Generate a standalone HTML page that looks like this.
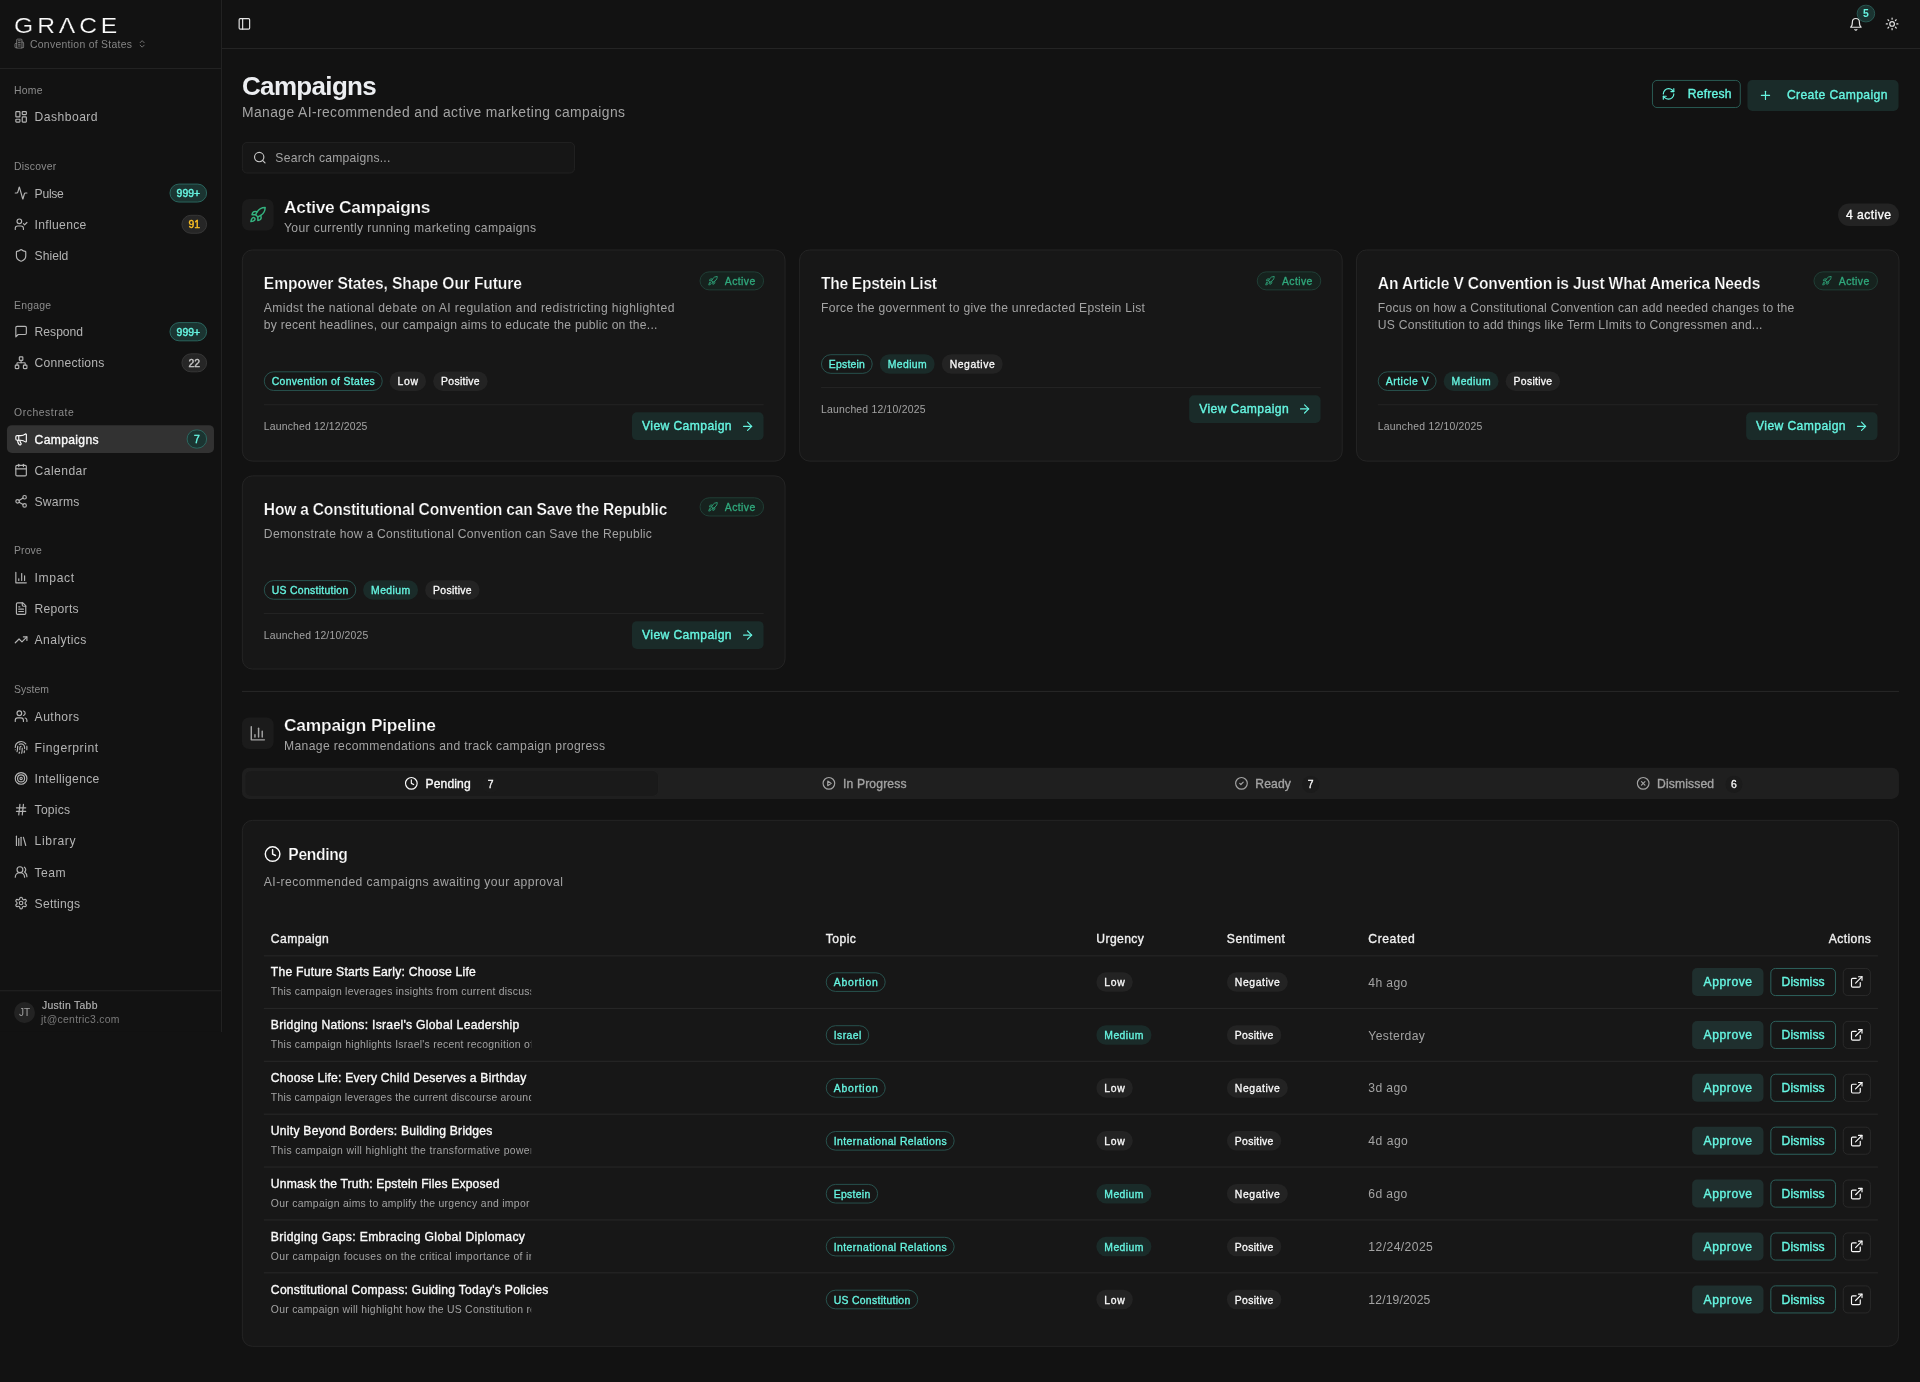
<!DOCTYPE html>
<html lang="en">
<head>
<meta charset="utf-8">
<title>Campaigns - GRACE</title>
<meta name="viewport" content="width=1920">
<style>
*{box-sizing:border-box;margin:0;padding:0}
html,body{width:1920px;height:1382px;background:#121212;overflow:hidden}
.root{position:absolute;left:0;top:0;width:8856px;height:6376px;transform-origin:0 0;will-change:transform}
body{font-family:"Liberation Sans",sans-serif;color:#fafafa;font-size:55.996px;line-height:80.719px;position:relative;-webkit-font-smoothing:antialiased}
span{white-space:nowrap}
svg{display:block;flex:none}
/* sidebar */
.sb{position:absolute;left:0;top:0;width:1023.975px;height:4760.1px;border-right:4px solid #262626;background:#121212}
.logo{position:absolute;left:64.575px;top:53.966px;height:129.15px;line-height:129.15px;font-size:101.475px;color:#fafafa;font-weight:400;-webkit-text-stroke:1.153px #121212;transform:scaleX(1.12);transform-origin:0 50%}
.lam{position:absolute;left:291.971px;top:123.846px;width:34.133px;height:10.148px;background:#121212;clip-path:polygon(9.5% 0,90.5% 0,100% 100%,0 100%)}
.org{position:absolute;left:64.575px;top:173.43px;height:64.575px;display:flex;align-items:center;color:#858585;font-size:47.97px;line-height:64.575px}
.org .orgt{margin-left:25.369px}
.org .chev{margin-left:24.446px}
.org svg:first-child{position:relative;top:-5.074px}
.org .chev{position:relative;top:-2.767px}
.sbline{position:absolute;left:0;width:1019.362px;height:4px;background:#262626}
.glabel{position:absolute;left:64.575px;height:129.15px;line-height:129.15px;font-size:47.97px;color:#8c8c8c;font-weight:500}
.ni{position:absolute;left:32.288px;width:954.787px;height:127.997px;border-radius:23.062px;display:flex;align-items:center;padding:0 31.826px 0 32.288px;color:#b4b4b4;font-size:55.996px}
.ni svg{margin-right:30.442px}
.ni>span:first-of-type{position:relative;top:2.306px}
.ni.act{background:#323232;color:#fafafa;-webkit-text-stroke:1.614px currentColor}
.nb{margin-left:auto;height:87.637px;min-width:94.095px;padding:0 28.598px;border-radius:46.125px;font-size:47.97px;-webkit-text-stroke:1.845px currentColor;display:flex;align-items:center;justify-content:center;border:4px solid;line-height:1;padding-top:4.612px}
.nb.bt{color:#66f5e1;background:#1b3431;border-color:#2c6e66}
.nb.ba{color:#fbbf24;background:#262626;border-color:#3a3a3a}
.nb.bg{color:#c8c8c8;background:#262626;border-color:#3a3a3a}
.user{position:absolute;left:64.575px;top:4606.042px;height:129.15px;display:flex;align-items:center}
.av{width:96.862px;height:96.862px;border-radius:50%;background:#232323;color:#a3a3a3;font-size:46.125px;display:flex;align-items:center;justify-content:center}
.ut{margin-left:32.288px;display:flex;flex-direction:column;align-items:flex-start}
.un{font-size:47.97px;line-height:64.575px;color:#b4b4b4;-webkit-text-stroke:0.692px currentColor}
.ue{font-size:47.97px;line-height:64.575px;color:#7a7a7a;position:relative;left:-4.612px}
/* header */
.hd{position:absolute;left:1023.975px;top:0;width:7832.025px;height:225.551px;border-bottom:4px solid #282828}
.hd svg{position:absolute}
.hd .panel{left:71.494px;top:78.412px;color:#e5e5e5}
.hd .bell{left:7504.076px;top:79.796px;color:#e5e5e5}
.hd .sun{left:7670.587px;top:78.412px;color:#e5e5e5}
.bellb{position:absolute;left:7539.592px;top:22.14px;width:85.331px;height:80.719px;border-radius:46.125px;background:#1b3431;border:4px solid #2b5f59;color:#66f5e1;font-size:47.97px;font-weight:700;display:flex;align-items:center;justify-content:center;line-height:1}
/* main */
main{position:absolute;left:0;top:0;width:8856px;height:6374.475px}
main>*{position:absolute}
h1{left:1116.225px;top:321.952px;font-size:119.925px;line-height:145.294px;font-weight:700;color:#eceef1}
.sub1{left:1116.225px;top:467.707px;font-size:64.022px;line-height:96.862px;color:#a3a3a3}
.btn{height:129.15px;border-radius:23.062px;display:flex;align-items:center;font-size:55.996px;-webkit-text-stroke:1.614px currentColor;color:#66f5e1}
.btn span{position:relative;top:-0.922px}
.rf{left:7619.85px;top:369px;width:409.129px;border:4px solid #2d655e;padding-left:40.59px}
.rf svg{margin-right:56.272px}
.cc{left:8060.344px;top:369px;width:696.487px;height:142.987px;background:#1a2b29;padding-left:50.737px}
.cc svg{margin-right:66.42px}
.search{left:1116.225px;top:654.975px;width:1535.962px;height:145.294px;border:4px solid #242424;border-radius:23.062px;background:#161616;display:flex;align-items:center;padding-left:46.125px;color:#a3a3a3;font-size:55.996px}
.search svg{margin-right:39.206px;color:#c8c8c8}
.search span{position:relative;top:2.306px}
.ibox{left:1116.225px;width:145.294px;height:145.294px;border-radius:32.288px;background:#1b1b1b;display:flex;align-items:center;justify-content:center}
h2{left:1309.95px;font-size:80.027px;line-height:113.006px;font-weight:700;color:#fafafa;-webkit-text-stroke:1.153px #121212}
.sub2{left:1309.95px;font-size:55.996px;line-height:80.719px;color:#a3a3a3}
.cnt{left:8477.775px;top:938.644px;width:281.362px;height:103.781px;border-radius:55.35px;background:#232323;color:#fafafa;font-size:55.996px;-webkit-text-stroke:1.614px currentColor;display:flex;align-items:center;justify-content:center;padding-top:3.69px}
.card{border:4px solid #272727;border-radius:48.431px;background:#171717}
.ac{width:2506.894px}
.ac>*{position:absolute}
.ct{left:96.862px;top:98.246px;font-size:71.955px;line-height:110.7px;font-weight:700;color:#fafafa;-webkit-text-stroke:1.153px #171717}
.cd{left:96.862px;top:226.012px;font-size:55.996px;line-height:78.412px;color:#a3a3a3}
.abadge{right:95.017px;top:96.862px;height:87.637px;border-radius:46.125px;border:4px solid #21433a;background:#16221e;color:#30a97d;font-size:47.97px;-webkit-text-stroke:1.384px currentColor;display:flex;align-items:center;padding:0 36.9px 0 32.749px}
.abadge svg{margin-right:31.365px}
.abadge span{position:relative;top:3.229px}
.tags{left:96.862px;display:flex;gap:32.288px}
.bd>span{position:relative;top:2.767px}
.bd{height:89.944px;border-radius:46.125px;padding:0 36.9px;font-size:47.97px;-webkit-text-stroke:1.384px currentColor;display:inline-flex;align-items:center;line-height:1}
.bd.out{border:4px solid #2a5a55;color:#66f5e1;padding:0 32.288px}
.bd.sec{background:#232323;color:#fafafa}
.bd.med{background:#1a2b29;color:#66f5e1}
.cline{left:96.862px;right:96.862px;height:4px;background:#262626}
.launched{left:96.862px;height:129.15px;line-height:129.15px;font-size:47.97px;color:#a3a3a3}
.vbtn{right:97.324px;height:127.997px;width:606.544px;border-radius:23.062px;background:#1a2b29;color:#66f5e1;font-size:55.996px;-webkit-text-stroke:1.614px currentColor;display:flex;align-items:center;padding-left:46.125px}
.vbtn svg{margin-left:41.512px}
.sep{left:1116.225px;top:3187.237px;width:7642.912px;height:4px;background:#2a2a2a}
.tabs{left:1116.225px;top:3541.477px;width:7642.912px;height:143.91px;border-radius:32.288px;background:#1f1f1f;padding:16.005px;display:flex}
.tab{flex:1;height:112.084px;border-radius:23.062px;display:flex;align-items:center;justify-content:center;color:#a3a3a3;font-size:55.996px;-webkit-text-stroke:1.614px currentColor}
.tab svg{margin-right:32.288px}
.tab.on{background:#1a1a1a;color:#fafafa;box-shadow:0 0 0 4px #212121}
.tab>span:first-of-type{position:relative;top:3.69px}
.tc{margin-left:52.121px;width:78.412px;height:79.796px;line-height:79.796px;border-radius:41.512px;background:#1b1b1b;text-align:center;font-size:47.97px;color:#fafafa;-webkit-text-stroke:1.384px currentColor;position:relative;top:4.151px}
.pc{left:1116.225px;top:3782.25px;width:7642.912px;height:2429.404px}
.pc>*{position:absolute}
.pt{left:96.862px;top:101.475px;height:113.006px;display:flex;align-items:center;font-size:71.955px;font-weight:700;color:#fafafa;-webkit-text-stroke:1.153px #171717}
.pt svg{margin-right:32.288px;position:relative;top:-4.612px}
.pd{left:96.862px;top:242.617px;font-size:55.996px;line-height:80.719px;color:#a3a3a3}
.th{left:96.862px;top:461.25px;width:7444.575px;height:163.744px;border-bottom:4px solid #2a2a2a;font-size:55.996px;-webkit-text-stroke:1.614px currentColor;color:#f0f0f0}
.th span{position:absolute;top:41.974px}
.tr{left:96.862px;width:7444.575px;height:244.001px;border-bottom:4px solid #2b2b2b}
.tr>*{position:absolute}
.tr:last-child{border-bottom:none}
.rt{left:32.288px;top:35.516px;font-size:55.996px;line-height:80.719px;-webkit-text-stroke:1.614px currentColor;color:#fafafa}
.rs{left:32.288px;top:132.84px;width:1200.634px;overflow:hidden;font-size:47.97px;line-height:64.575px;color:#a3a3a3}
.c2{left:2592.225px;top:76.106px}
.c3{left:3839.906px;top:76.106px}
.c4{left:4441.837px;top:76.106px}
.cr{left:5094.506px;top:83.025px;color:#a3a3a3;font-size:55.996px;line-height:80.719px}
.b{top:55.811px;height:129.15px;border-radius:23.062px;display:flex;align-items:center;justify-content:center;font-size:55.996px;-webkit-text-stroke:1.614px currentColor;color:#66f5e1}
.b span{position:relative;top:1.845px}
.ap{left:6588.034px;width:329.332px;background:#1f2f2e}
.ds{left:6948.731px;width:302.119px;border:4px solid #2f6b65}
.ex{left:7283.137px;width:129.15px;border:4px solid #2c2c2c;color:#fafafa}

</style>
</head>
<body>
<div class="root" style="transform:scale(0.216802)">
<aside class="sb">
<div class="logo"><span style="letter-spacing:16.042px;margin-right:-16.042px">GRACE</span></div><i class="lam"></i>
<div class="org"><svg width="48.431" height="48.431" viewBox="0 0 24 24" fill="none" stroke="currentColor" stroke-width="2" stroke-linecap="round" stroke-linejoin="round"><path d="M6 22V4a2 2 0 0 1 2-2h8a2 2 0 0 1 2 2v18Z"/><path d="M6 12H4a2 2 0 0 0-2 2v6a2 2 0 0 0 2 2h2"/><path d="M18 9h2a2 2 0 0 1 2 2v9a2 2 0 0 1-2 2h-2"/><path d="M10 6h4"/><path d="M10 10h4"/><path d="M10 14h4"/><path d="M10 18h4"/></svg><span class="orgt" style="letter-spacing:1.324px;margin-right:-1.324px">Convention of States</span><svg class="chev" width="45.203" height="45.203" viewBox="0 0 24 24" fill="none" stroke="currentColor" stroke-width="2" stroke-linecap="round" stroke-linejoin="round"><path d="m7 15 5 5 5-5"/><path d="m7 9 5-5 5 5"/></svg></div>
<div class="sbline" style="top:313.65px"></div>
<div class="glabel" style="top:351.472px"><span style="letter-spacing:1.162px;margin-right:-1.162px">Home</span></div>
<div class="ni" style="top:475.226px"><svg width="64.575" height="64.575" viewBox="0 0 24 24" fill="none" stroke="currentColor" stroke-width="2" stroke-linecap="round" stroke-linejoin="round"><rect width="7" height="9" x="3" y="3" rx="1"/><rect width="7" height="5" x="14" y="3" rx="1"/><rect width="7" height="9" x="14" y="12" rx="1"/><rect width="7" height="5" x="3" y="16" rx="1"/></svg><span style="letter-spacing:2.085px;margin-right:-2.085px">Dashboard</span></div>
<div class="glabel" style="top:702.945px"><span style="letter-spacing:1.185px;margin-right:-1.185px">Discover</span></div>
<div class="ni" style="top:826.698px"><svg width="64.575" height="64.575" viewBox="0 0 24 24" fill="none" stroke="currentColor" stroke-width="2" stroke-linecap="round" stroke-linejoin="round"><path d="M22 12h-2.48a2 2 0 0 0-1.93 1.46l-2.35 8.36a.25.25 0 0 1-.48 0L9.24 2.18a.25.25 0 0 0-.48 0l-2.35 8.36A2 2 0 0 1 4.49 12H2"/></svg><span style="letter-spacing:-1.282px;margin-right:1.282px">Pulse</span><span class="nb bt">999+</span></div>
<div class="ni" style="top:970.47px"><svg width="64.575" height="64.575" viewBox="0 0 24 24" fill="none" stroke="currentColor" stroke-width="2" stroke-linecap="round" stroke-linejoin="round"><path d="m16 11 2 2 4-4"/><path d="M16 21v-2a4 4 0 0 0-4-4H6a4 4 0 0 0-4 4v2"/><circle cx="9" cy="7" r="4"/></svg><span style="letter-spacing:1.434px;margin-right:-1.434px">Influence</span><span class="nb ba">91</span></div>
<div class="ni" style="top:1114.242px"><svg width="64.575" height="64.575" viewBox="0 0 24 24" fill="none" stroke="currentColor" stroke-width="2" stroke-linecap="round" stroke-linejoin="round"><path d="M20 13c0 5-3.5 7.5-7.66 8.95a1 1 0 0 1-.67-.01C7.5 20.5 4 18 4 13V6a1 1 0 0 1 1-1c2 0 4.5-1.2 6.24-2.72a1.17 1.17 0 0 1 1.52 0C14.51 3.81 17 5 19 5a1 1 0 0 1 1 1z"/></svg><span style="letter-spacing:0.009px;margin-right:-0.009px">Shield</span></div>
<div class="glabel" style="top:1341.961px"><span style="letter-spacing:1.056px;margin-right:-1.056px">Engage</span></div>
<div class="ni" style="top:1465.714px"><svg width="64.575" height="64.575" viewBox="0 0 24 24" fill="none" stroke="currentColor" stroke-width="2" stroke-linecap="round" stroke-linejoin="round"><path d="M21 15a2 2 0 0 1-2 2H7l-4 4V5a2 2 0 0 1 2-2h14a2 2 0 0 1 2 2z"/></svg><span style="letter-spacing:-0.069px;margin-right:0.069px">Respond</span><span class="nb bt">999+</span></div>
<div class="ni" style="top:1609.532px"><svg width="64.575" height="64.575" viewBox="0 0 24 24" fill="none" stroke="currentColor" stroke-width="2" stroke-linecap="round" stroke-linejoin="round"><rect x="16" y="16" width="6" height="6" rx="1"/><rect x="2" y="16" width="6" height="6" rx="1"/><rect x="9" y="2" width="6" height="6" rx="1"/><path d="M5 16v-3a1 1 0 0 1 1-1h12a1 1 0 0 1 1 1v3"/><path d="M12 12V8"/></svg><span style="letter-spacing:1.047px;margin-right:-1.047px">Connections</span><span class="nb bg">22</span></div>
<div class="glabel" style="top:1837.205px"><span style="letter-spacing:2.5px;margin-right:-2.5px">Orchestrate</span></div>
<div class="ni act" style="top:1960.958px"><svg width="64.575" height="64.575" viewBox="0 0 24 24" fill="none" stroke="currentColor" stroke-width="2" stroke-linecap="round" stroke-linejoin="round"><path d="M11 6a13 13 0 0 0 8.4-2.8A1 1 0 0 1 21 4v12a1 1 0 0 1-1.6.8A13 13 0 0 0 11 14H5a2 2 0 0 1-2-2V8a2 2 0 0 1 2-2z"/><path d="M6 14a12 12 0 0 0 2.4 7.2 2 2 0 0 0 3.2-2.4A8 8 0 0 1 10 14"/><path d="M8 6v8"/></svg><span style="letter-spacing:1.504px;margin-right:-1.504px">Campaigns</span><span class="nb bt">7</span></div>
<div class="ni" style="top:2104.776px"><svg width="64.575" height="64.575" viewBox="0 0 24 24" fill="none" stroke="currentColor" stroke-width="2" stroke-linecap="round" stroke-linejoin="round"><path d="M8 2v4"/><path d="M16 2v4"/><rect width="18" height="18" x="3" y="4" rx="2"/><path d="M3 10h18"/></svg><span style="letter-spacing:1.97px;margin-right:-1.97px">Calendar</span></div>
<div class="ni" style="top:2248.548px"><svg width="64.575" height="64.575" viewBox="0 0 24 24" fill="none" stroke="currentColor" stroke-width="2" stroke-linecap="round" stroke-linejoin="round"><circle cx="18" cy="5" r="3"/><circle cx="6" cy="12" r="3"/><circle cx="18" cy="19" r="3"/><line x1="8.59" x2="15.42" y1="13.51" y2="17.49"/><line x1="15.41" x2="8.59" y1="6.51" y2="10.49"/></svg><span style="letter-spacing:0.844px;margin-right:-0.844px">Swarms</span></div>
<div class="glabel" style="top:2476.267px"><span style="letter-spacing:0.673px;margin-right:-0.673px">Prove</span></div>
<div class="ni" style="top:2600.02px"><svg width="64.575" height="64.575" viewBox="0 0 24 24" fill="none" stroke="currentColor" stroke-width="2" stroke-linecap="round" stroke-linejoin="round"><path d="M3 3v18h18"/><path d="M18 17V9"/><path d="M13 17V5"/><path d="M8 17v-3"/></svg><span style="letter-spacing:2.837px;margin-right:-2.837px">Impact</span></div>
<div class="ni" style="top:2743.792px"><svg width="64.575" height="64.575" viewBox="0 0 24 24" fill="none" stroke="currentColor" stroke-width="2" stroke-linecap="round" stroke-linejoin="round"><path d="M15 2H6a2 2 0 0 0-2 2v16a2 2 0 0 0 2 2h12a2 2 0 0 0 2-2V7Z"/><path d="M14 2v4a2 2 0 0 0 2 2h4"/><path d="M10 9H8"/><path d="M16 13H8"/><path d="M16 17H8"/></svg><span style="letter-spacing:1.153px;margin-right:-1.153px">Reports</span></div>
<div class="ni" style="top:2887.563px"><svg width="64.575" height="64.575" viewBox="0 0 24 24" fill="none" stroke="currentColor" stroke-width="2" stroke-linecap="round" stroke-linejoin="round"><polyline points="22 7 13.5 15.5 8.5 10.5 2 17"/><polyline points="16 7 22 7 22 13"/></svg><span style="letter-spacing:1.831px;margin-right:-1.831px">Analytics</span></div>
<div class="glabel" style="top:3115.282px"><span style="letter-spacing:0.3px;margin-right:-0.3px">System</span></div>
<div class="ni" style="top:3239.036px"><svg width="64.575" height="64.575" viewBox="0 0 24 24" fill="none" stroke="currentColor" stroke-width="2" stroke-linecap="round" stroke-linejoin="round"><path d="M16 21v-2a4 4 0 0 0-4-4H6a4 4 0 0 0-4 4v2"/><circle cx="9" cy="7" r="4"/><path d="M22 21v-2a4 4 0 0 0-3-3.87"/><path d="M16 3.13a4 4 0 0 1 0 7.75"/></svg><span style="letter-spacing:2.053px;margin-right:-2.053px">Authors</span></div>
<div class="ni" style="top:3382.854px"><svg width="64.575" height="64.575" viewBox="0 0 24 24" fill="none" stroke="currentColor" stroke-width="2" stroke-linecap="round" stroke-linejoin="round"><path d="M12 10a2 2 0 0 0-2 2c0 1.02-.1 2.51-.26 4"/><path d="M14 13.12c0 2.38 0 6.38-1 8.88"/><path d="M17.29 21.02c.12-.6.43-2.3.5-3.02"/><path d="M2 12a10 10 0 0 1 18-6"/><path d="M2 16h.01"/><path d="M21.8 16c.2-2 .131-5.354 0-6"/><path d="M5 19.5C5.5 18 6 15 6 12a6 6 0 0 1 .34-2"/><path d="M8.65 22c.21-.66.45-1.32.57-2"/><path d="M9 6.8a6 6 0 0 1 9 5.2v2"/></svg><span style="letter-spacing:2.532px;margin-right:-2.532px">Fingerprint</span></div>
<div class="ni" style="top:3526.625px"><svg width="64.575" height="64.575" viewBox="0 0 24 24" fill="none" stroke="currentColor" stroke-width="2" stroke-linecap="round" stroke-linejoin="round"><circle cx="12" cy="12" r="10"/><circle cx="12" cy="12" r="6"/><circle cx="12" cy="12" r="2"/></svg><span style="letter-spacing:1.402px;margin-right:-1.402px">Intelligence</span></div>
<div class="ni" style="top:3670.397px"><svg width="64.575" height="64.575" viewBox="0 0 24 24" fill="none" stroke="currentColor" stroke-width="2" stroke-linecap="round" stroke-linejoin="round"><line x1="4" x2="20" y1="9" y2="9"/><line x1="4" x2="20" y1="15" y2="15"/><line x1="10" x2="8" y1="3" y2="21"/><line x1="16" x2="14" y1="3" y2="21"/></svg><span style="letter-spacing:1.01px;margin-right:-1.01px">Topics</span></div>
<div class="ni" style="top:3814.168px"><svg width="64.575" height="64.575" viewBox="0 0 24 24" fill="none" stroke="currentColor" stroke-width="2" stroke-linecap="round" stroke-linejoin="round"><path d="m16 6 4 14"/><path d="M12 6v14"/><path d="M8 8v12"/><path d="M4 4v16"/></svg><span style="letter-spacing:2.998px;margin-right:-2.998px">Library</span></div>
<div class="ni" style="top:3957.94px"><svg width="64.575" height="64.575" viewBox="0 0 24 24" fill="none" stroke="currentColor" stroke-width="2" stroke-linecap="round" stroke-linejoin="round"><path d="M18 21a8 8 0 0 0-16 0"/><circle cx="10" cy="8" r="5"/><path d="M22 20c0-3.37-2-6.5-4-8a5 5 0 0 0-.45-8.3"/></svg><span style="letter-spacing:2.025px;margin-right:-2.025px">Team</span></div>
<div class="ni" style="top:4101.758px"><svg width="64.575" height="64.575" viewBox="0 0 24 24" fill="none" stroke="currentColor" stroke-width="2" stroke-linecap="round" stroke-linejoin="round"><path d="M12.22 2h-.44a2 2 0 0 0-2 2v.18a2 2 0 0 1-1 1.73l-.43.25a2 2 0 0 1-2 0l-.15-.08a2 2 0 0 0-2.73.73l-.22.38a2 2 0 0 0 .73 2.73l.15.1a2 2 0 0 1 1 1.72v.51a2 2 0 0 1-1 1.74l-.15.09a2 2 0 0 0-.73 2.73l.22.38a2 2 0 0 0 2.73.73l.15-.08a2 2 0 0 1 2 0l.43.25a2 2 0 0 1 1 1.73V20a2 2 0 0 0 2 2h.44a2 2 0 0 0 2-2v-.18a2 2 0 0 1 1-1.73l.43-.25a2 2 0 0 1 2 0l.15.08a2 2 0 0 0 2.73-.73l.22-.39a2 2 0 0 0-.73-2.73l-.15-.08a2 2 0 0 1-1-1.74v-.5a2 2 0 0 1 1-1.74l.15-.09a2 2 0 0 0 .73-2.73l-.22-.38a2 2 0 0 0-2.73-.73l-.15.08a2 2 0 0 1-2 0l-.43-.25a2 2 0 0 1-1-1.73V4a2 2 0 0 0-2-2z"/><circle cx="12" cy="12" r="3"/></svg><span style="letter-spacing:1.084px;margin-right:-1.084px">Settings</span></div>
<div class="sbline" style="top:4567.759px"></div>
<div class="user"><div class="av">JT</div><div class="ut"><span class="un" style="letter-spacing:1.421px;margin-right:-1.421px">Justin Tabb</span><span class="ue" style="letter-spacing:1.25px;margin-right:-1.25px">jt@centric3.com</span></div></div>
</aside>
<header class="hd">
<svg class="panel" width="64.575" height="64.575" viewBox="0 0 24 24" fill="none" stroke="currentColor" stroke-width="2" stroke-linecap="round" stroke-linejoin="round"><rect width="18" height="18" x="3" y="3" rx="2"/><path d="M9 3v18"/></svg>
<svg class="bell" width="64.575" height="64.575" viewBox="0 0 24 24" fill="none" stroke="currentColor" stroke-width="2" stroke-linecap="round" stroke-linejoin="round"><path d="M6 8a6 6 0 0 1 12 0c0 7 3 9 3 9H3s3-2 3-9"/><path d="M10.3 21a1.94 1.94 0 0 0 3.4 0"/></svg>
<span class="bellb">5</span>
<svg class="sun" width="64.575" height="64.575" viewBox="0 0 24 24" fill="none" stroke="currentColor" stroke-width="2" stroke-linecap="round" stroke-linejoin="round"><circle cx="12" cy="12" r="4"/><path d="M12 2v2"/><path d="M12 20v2"/><path d="m4.93 4.93 1.41 1.41"/><path d="m17.66 17.66 1.41 1.41"/><path d="M2 12h2"/><path d="M20 12h2"/><path d="m6.34 17.66-1.41 1.41"/><path d="m19.07 4.93-1.41 1.41"/></svg>
</header>
<main>
<h1><span style="letter-spacing:-3.095px;margin-right:3.095px">Campaigns</span></h1>
<p class="sub1"><span style="letter-spacing:1.845px;margin-right:-1.845px">Manage AI-recommended and active marketing campaigns</span></p>
<div class="btn rf"><svg width="64.575" height="64.575" viewBox="0 0 24 24" fill="none" stroke="currentColor" stroke-width="2" stroke-linecap="round" stroke-linejoin="round"><path d="M3 12a9 9 0 0 1 9-9 9.75 9.75 0 0 1 6.74 2.74L21 8"/><path d="M21 3v5h-5"/><path d="M21 12a9 9 0 0 1-9 9 9.75 9.75 0 0 1-6.74-2.74L3 16"/><path d="M8 16H3v5"/></svg><span style="letter-spacing:0.959px;margin-right:-0.959px">Refresh</span></div>
<div class="btn cc"><svg width="64.575" height="64.575" viewBox="0 0 24 24" fill="none" stroke="currentColor" stroke-width="2" stroke-linecap="round" stroke-linejoin="round"><path d="M5 12h14"/><path d="M12 5v14"/></svg><span style="letter-spacing:1.771px;margin-right:-1.771px">Create Campaign</span></div>
<div class="search"><svg width="64.575" height="64.575" viewBox="0 0 24 24" fill="none" stroke="currentColor" stroke-width="2" stroke-linecap="round" stroke-linejoin="round"><circle cx="11" cy="11" r="8"/><path d="m21 21-4.3-4.3"/></svg><span style="letter-spacing:1.116px;margin-right:-1.116px">Search campaigns...</span></div>
<div class="ibox" style="top:917.887px;color:#34b27f"><svg width="80.719" height="80.719" viewBox="0 0 24 24" fill="none" stroke="currentColor" stroke-width="2" stroke-linecap="round" stroke-linejoin="round"><path d="M4.5 16.5c-1.5 1.26-2 5-2 5s3.74-.5 5-2c.71-.84.7-2.13-.09-2.91a2.18 2.18 0 0 0-2.91-.09z"/><path d="m12 15-3-3a22 22 0 0 1 2-3.95A12.88 12.88 0 0 1 22 2c0 2.72-.78 7.5-6 11a22.35 22.35 0 0 1-4 2z"/><path d="M9 12H4s.55-3.03 2-4c1.62-1.08 5 0 5 0"/><path d="M12 15v5s3.03-.55 4-2c1.08-1.62 0-5 0-5"/></svg></div>
<h2 style="top:898.976px"><span style="letter-spacing:-1.199px;margin-right:1.199px">Active Campaigns</span></h2>
<p class="sub2" style="top:1010.137px"><span style="letter-spacing:1.684px;margin-right:-1.684px">Your currently running marketing campaigns</span></p>
<div class="cnt"><span style="letter-spacing:2.085px;margin-right:-2.085px">4 active</span></div>
<div class="card ac" style="left:1116.225px;top:1150.819px;height:977.85px">
<div class="ct"><span style="letter-spacing:-0.553px;margin-right:0.553px">Empower States, Shape Our Future</span></div>
<div class="cd"><div><span style="letter-spacing:1.79px;margin-right:-1.79px">Amidst the national debate on AI regulation and redistricting highlighted</span></div><div><span style="letter-spacing:1.093px;margin-right:-1.093px">by recent headlines, our campaign aims to educate the public on the...</span></div></div>
<div class="abadge"><svg width="48.431" height="48.431" viewBox="0 0 24 24" fill="none" stroke="currentColor" stroke-width="2" stroke-linecap="round" stroke-linejoin="round"><path d="M4.5 16.5c-1.5 1.26-2 5-2 5s3.74-.5 5-2c.71-.84.7-2.13-.09-2.91a2.18 2.18 0 0 0-2.91-.09z"/><path d="m12 15-3-3a22 22 0 0 1 2-3.95A12.88 12.88 0 0 1 22 2c0 2.72-.78 7.5-6 11a22.35 22.35 0 0 1-4 2z"/><path d="M9 12H4s.55-3.03 2-4c1.62-1.08 5 0 5 0"/><path d="M12 15v5s3.03-.55 4-2c1.08-1.62 0-5 0-5"/></svg><span style="letter-spacing:1.822px;margin-right:-1.822px">Active</span></div>
<div class="tags" style="top:558.343px"><span class="bd out"><span style="letter-spacing:1.568px;margin-right:-1.568px">Convention of States</span></span><span class="bd sec"><span style="letter-spacing:3.279px;margin-right:-3.279px">Low</span></span><span class="bd sec"><span style="letter-spacing:1.375px;margin-right:-1.375px">Positive</span></span></div>
<div class="cline" style="top:710.094px"></div>
<div class="launched" style="top:746.994px"><span style="letter-spacing:0.738px;margin-right:-0.738px">Launched 12/12/2025</span></div>
<div class="vbtn" style="top:747.456px"><span style="letter-spacing:1.813px;margin-right:-1.813px">View Campaign</span><svg width="64.575" height="64.575" viewBox="0 0 24 24" fill="none" stroke="currentColor" stroke-width="2" stroke-linecap="round" stroke-linejoin="round"><path d="M5 12h14"/><path d="m12 5 7 7-7 7"/></svg></div>
</div>
<div class="card ac" style="left:3685.849px;top:1150.819px;height:977.85px">
<div class="ct"><span style="letter-spacing:-1.37px;margin-right:1.37px">The Epstein List</span></div>
<div class="cd"><div><span style="letter-spacing:1.315px;margin-right:-1.315px">Force the government to give the unredacted Epstein List</span></div></div>
<div class="abadge"><svg width="48.431" height="48.431" viewBox="0 0 24 24" fill="none" stroke="currentColor" stroke-width="2" stroke-linecap="round" stroke-linejoin="round"><path d="M4.5 16.5c-1.5 1.26-2 5-2 5s3.74-.5 5-2c.71-.84.7-2.13-.09-2.91a2.18 2.18 0 0 0-2.91-.09z"/><path d="m12 15-3-3a22 22 0 0 1 2-3.95A12.88 12.88 0 0 1 22 2c0 2.72-.78 7.5-6 11a22.35 22.35 0 0 1-4 2z"/><path d="M9 12H4s.55-3.03 2-4c1.62-1.08 5 0 5 0"/><path d="M12 15v5s3.03-.55 4-2c1.08-1.62 0-5 0-5"/></svg><span style="letter-spacing:1.822px;margin-right:-1.822px">Active</span></div>
<div class="tags" style="top:478.777px"><span class="bd out"><span style="letter-spacing:1.01px;margin-right:-1.01px">Epstein</span></span><span class="bd med"><span style="letter-spacing:1.854px;margin-right:-1.854px">Medium</span></span><span class="bd sec"><span style="letter-spacing:2.606px;margin-right:-2.606px">Negative</span></span></div>
<div class="cline" style="top:630.529px"></div>
<div class="launched" style="top:667.429px"><span style="letter-spacing:0.992px;margin-right:-0.992px">Launched 12/10/2025</span></div>
<div class="vbtn" style="top:667.89px"><span style="letter-spacing:1.813px;margin-right:-1.813px">View Campaign</span><svg width="64.575" height="64.575" viewBox="0 0 24 24" fill="none" stroke="currentColor" stroke-width="2" stroke-linecap="round" stroke-linejoin="round"><path d="M5 12h14"/><path d="m12 5 7 7-7 7"/></svg></div>
</div>
<div class="card ac" style="left:6254.55px;top:1150.819px;height:977.85px">
<div class="ct"><span style="letter-spacing:-0.761px;margin-right:0.761px">An Article V Convention is Just What America Needs</span></div>
<div class="cd"><div><span style="letter-spacing:1.047px;margin-right:-1.047px">Focus on how a Constitutional Convention can add needed changes to the</span></div><div><span style="letter-spacing:0.941px;margin-right:-0.941px">US Constitution to add things like Term LImits to Congressmen and...</span></div></div>
<div class="abadge"><svg width="48.431" height="48.431" viewBox="0 0 24 24" fill="none" stroke="currentColor" stroke-width="2" stroke-linecap="round" stroke-linejoin="round"><path d="M4.5 16.5c-1.5 1.26-2 5-2 5s3.74-.5 5-2c.71-.84.7-2.13-.09-2.91a2.18 2.18 0 0 0-2.91-.09z"/><path d="m12 15-3-3a22 22 0 0 1 2-3.95A12.88 12.88 0 0 1 22 2c0 2.72-.78 7.5-6 11a22.35 22.35 0 0 1-4 2z"/><path d="M9 12H4s.55-3.03 2-4c1.62-1.08 5 0 5 0"/><path d="M12 15v5s3.03-.55 4-2c1.08-1.62 0-5 0-5"/></svg><span style="letter-spacing:1.822px;margin-right:-1.822px">Active</span></div>
<div class="tags" style="top:558.343px"><span class="bd out"><span style="letter-spacing:2.468px;margin-right:-2.468px">Article V</span></span><span class="bd med"><span style="letter-spacing:1.854px;margin-right:-1.854px">Medium</span></span><span class="bd sec"><span style="letter-spacing:1.375px;margin-right:-1.375px">Positive</span></span></div>
<div class="cline" style="top:710.094px"></div>
<div class="launched" style="top:746.994px"><span style="letter-spacing:0.992px;margin-right:-0.992px">Launched 12/10/2025</span></div>
<div class="vbtn" style="top:747.456px"><span style="letter-spacing:1.813px;margin-right:-1.813px">View Campaign</span><svg width="64.575" height="64.575" viewBox="0 0 24 24" fill="none" stroke="currentColor" stroke-width="2" stroke-linecap="round" stroke-linejoin="round"><path d="M5 12h14"/><path d="m12 5 7 7-7 7"/></svg></div>
</div>
<div class="card ac" style="left:1116.225px;top:2193.244px;height:894.825px">
<div class="ct"><span style="letter-spacing:-1.029px;margin-right:1.029px">How a Constitutional Convention can Save the Republic</span></div>
<div class="cd"><div><span style="letter-spacing:1.172px;margin-right:-1.172px">Demonstrate how a Constitutional Convention can Save the Republic</span></div></div>
<div class="abadge"><svg width="48.431" height="48.431" viewBox="0 0 24 24" fill="none" stroke="currentColor" stroke-width="2" stroke-linecap="round" stroke-linejoin="round"><path d="M4.5 16.5c-1.5 1.26-2 5-2 5s3.74-.5 5-2c.71-.84.7-2.13-.09-2.91a2.18 2.18 0 0 0-2.91-.09z"/><path d="m12 15-3-3a22 22 0 0 1 2-3.95A12.88 12.88 0 0 1 22 2c0 2.72-.78 7.5-6 11a22.35 22.35 0 0 1-4 2z"/><path d="M9 12H4s.55-3.03 2-4c1.62-1.08 5 0 5 0"/><path d="M12 15v5s3.03-.55 4-2c1.08-1.62 0-5 0-5"/></svg><span style="letter-spacing:1.822px;margin-right:-1.822px">Active</span></div>
<div class="tags" style="top:478.777px"><span class="bd out"><span style="letter-spacing:1.398px;margin-right:-1.398px">US Constitution</span></span><span class="bd med"><span style="letter-spacing:1.854px;margin-right:-1.854px">Medium</span></span><span class="bd sec"><span style="letter-spacing:1.375px;margin-right:-1.375px">Positive</span></span></div>
<div class="cline" style="top:630.529px"></div>
<div class="launched" style="top:667.429px"><span style="letter-spacing:0.992px;margin-right:-0.992px">Launched 12/10/2025</span></div>
<div class="vbtn" style="top:667.89px"><span style="letter-spacing:1.813px;margin-right:-1.813px">View Campaign</span><svg width="64.575" height="64.575" viewBox="0 0 24 24" fill="none" stroke="currentColor" stroke-width="2" stroke-linecap="round" stroke-linejoin="round"><path d="M5 12h14"/><path d="m12 5 7 7-7 7"/></svg></div>
</div>
<div class="sep"></div>
<div class="ibox" style="top:3309.469px;color:#a3a3a3"><svg width="80.719" height="80.719" viewBox="0 0 24 24" fill="none" stroke="currentColor" stroke-width="2" stroke-linecap="round" stroke-linejoin="round"><path d="M3 3v18h18"/><path d="M18 17V9"/><path d="M13 17V5"/><path d="M8 17v-3"/></svg></div>
<h2 style="top:3288.712px"><span style="letter-spacing:-0.922px;margin-right:0.922px">Campaign Pipeline</span></h2>
<p class="sub2" style="top:3401.719px"><span style="letter-spacing:1.637px;margin-right:-1.637px">Manage recommendations and track campaign progress</span></p>
<div class="tabs">
<div class="tab on"><svg width="64.575" height="64.575" viewBox="0 0 24 24" fill="none" stroke="currentColor" stroke-width="2" stroke-linecap="round" stroke-linejoin="round"><circle cx="12" cy="12" r="10"/><polyline points="12 6 12 12 16 14"/></svg><span style="letter-spacing:0.581px;margin-right:-0.581px">Pending</span><span class="tc">7</span></div>
<div class="tab"><svg width="64.575" height="64.575" viewBox="0 0 24 24" fill="none" stroke="currentColor" stroke-width="2" stroke-linecap="round" stroke-linejoin="round"><circle cx="12" cy="12" r="10"/><polygon points="10 8 16 12 10 16 10 8"/></svg><span style="letter-spacing:0.664px;margin-right:-0.664px">In Progress</span></div>
<div class="tab"><svg width="64.575" height="64.575" viewBox="0 0 24 24" fill="none" stroke="currentColor" stroke-width="2" stroke-linecap="round" stroke-linejoin="round"><circle cx="12" cy="12" r="10"/><path d="m9 12 2 2 4-4"/></svg><span style="letter-spacing:0.475px;margin-right:-0.475px">Ready</span><span class="tc">7</span></div>
<div class="tab"><svg width="64.575" height="64.575" viewBox="0 0 24 24" fill="none" stroke="currentColor" stroke-width="2" stroke-linecap="round" stroke-linejoin="round"><circle cx="12" cy="12" r="10"/><path d="m15 9-6 6"/><path d="m9 9 6 6"/></svg><span style="letter-spacing:0.59px;margin-right:-0.59px">Dismissed</span><span class="tc">6</span></div>
</div>
<div class="card pc">
<div class="pt"><svg width="80.719" height="80.719" viewBox="0 0 24 24" fill="none" stroke="currentColor" stroke-width="2" stroke-linecap="round" stroke-linejoin="round"><circle cx="12" cy="12" r="10"/><polyline points="12 6 12 12 16 14"/></svg><span style="letter-spacing:-1.55px;margin-right:1.55px">Pending</span></div>
<div class="pd"><span style="letter-spacing:1.905px;margin-right:-1.905px">AI-recommended campaigns awaiting your approval</span></div>
<div class="th"><span style="left:32.288px;letter-spacing:1.762px;margin-right:-1.762px">Campaign</span><span style="left:2592.225px;letter-spacing:1.919px;margin-right:-1.919px">Topic</span><span style="left:3839.906px;letter-spacing:1.771px;margin-right:-1.771px">Urgency</span><span style="left:4441.837px;letter-spacing:1.933px;margin-right:-1.933px">Sentiment</span><span style="left:5094.506px;letter-spacing:2.551px;margin-right:-2.551px">Created</span><span style="right:32.288px;letter-spacing:1.688px;margin-right:-1.688px">Actions</span></div>
<div class="tr" style="top:622.688px">
<div class="rt"><span style="letter-spacing:1.056px;margin-right:-1.056px">The Future Starts Early: Choose Life</span></div>
<div class="rs"><span style="letter-spacing:1.232px;margin-right:-1.232px">This campaign leverages insights from current discuss</span></div>
<span class="bd out c2"><span style="letter-spacing:3.469px;margin-right:-3.469px">Abortion</span></span>
<span class="bd sec c3"><span style="letter-spacing:3.279px;margin-right:-3.279px">Low</span></span>
<span class="bd sec c4"><span style="letter-spacing:2.606px;margin-right:-2.606px">Negative</span></span>
<span class="cr"><span style="letter-spacing:1.73px;margin-right:-1.73px">4h ago</span></span>
<div class="b ap"><span style="letter-spacing:2.528px;margin-right:-2.528px">Approve</span></div><div class="b ds"><span style="letter-spacing:0.401px;margin-right:-0.401px">Dismiss</span></div><div class="b ex"><svg width="64.575" height="64.575" viewBox="0 0 24 24" fill="none" stroke="currentColor" stroke-width="2" stroke-linecap="round" stroke-linejoin="round"><path d="M15 3h6v6"/><path d="M10 14 21 3"/><path d="M18 13v6a2 2 0 0 1-2 2H5a2 2 0 0 1-2-2V8a2 2 0 0 1 2-2h6"/></svg></div>
</div>
<div class="tr" style="top:866.689px">
<div class="rt"><span style="letter-spacing:1.365px;margin-right:-1.365px">Bridging Nations: Israel's Global Leadership</span></div>
<div class="rs"><span style="letter-spacing:1.287px;margin-right:-1.287px">This campaign highlights Israel's recent recognition of</span></div>
<span class="bd out c2"><span style="letter-spacing:1.905px;margin-right:-1.905px">Israel</span></span>
<span class="bd med c3"><span style="letter-spacing:1.854px;margin-right:-1.854px">Medium</span></span>
<span class="bd sec c4"><span style="letter-spacing:1.375px;margin-right:-1.375px">Positive</span></span>
<span class="cr"><span style="letter-spacing:1.707px;margin-right:-1.707px">Yesterday</span></span>
<div class="b ap"><span style="letter-spacing:2.528px;margin-right:-2.528px">Approve</span></div><div class="b ds"><span style="letter-spacing:0.401px;margin-right:-0.401px">Dismiss</span></div><div class="b ex"><svg width="64.575" height="64.575" viewBox="0 0 24 24" fill="none" stroke="currentColor" stroke-width="2" stroke-linecap="round" stroke-linejoin="round"><path d="M15 3h6v6"/><path d="M10 14 21 3"/><path d="M18 13v6a2 2 0 0 1-2 2H5a2 2 0 0 1-2-2V8a2 2 0 0 1 2-2h6"/></svg></div>
</div>
<div class="tr" style="top:1110.69px">
<div class="rt"><span style="letter-spacing:0.992px;margin-right:-0.992px">Choose Life: Every Child Deserves a Birthday</span></div>
<div class="rs"><span style="letter-spacing:1.125px;margin-right:-1.125px">This campaign leverages the current discourse around</span></div>
<span class="bd out c2"><span style="letter-spacing:3.469px;margin-right:-3.469px">Abortion</span></span>
<span class="bd sec c3"><span style="letter-spacing:3.279px;margin-right:-3.279px">Low</span></span>
<span class="bd sec c4"><span style="letter-spacing:2.606px;margin-right:-2.606px">Negative</span></span>
<span class="cr"><span style="letter-spacing:1.73px;margin-right:-1.73px">3d ago</span></span>
<div class="b ap"><span style="letter-spacing:2.528px;margin-right:-2.528px">Approve</span></div><div class="b ds"><span style="letter-spacing:0.401px;margin-right:-0.401px">Dismiss</span></div><div class="b ex"><svg width="64.575" height="64.575" viewBox="0 0 24 24" fill="none" stroke="currentColor" stroke-width="2" stroke-linecap="round" stroke-linejoin="round"><path d="M15 3h6v6"/><path d="M10 14 21 3"/><path d="M18 13v6a2 2 0 0 1-2 2H5a2 2 0 0 1-2-2V8a2 2 0 0 1 2-2h6"/></svg></div>
</div>
<div class="tr" style="top:1354.691px">
<div class="rt"><span style="letter-spacing:1.121px;margin-right:-1.121px">Unity Beyond Borders: Building Bridges</span></div>
<div class="rs"><span style="letter-spacing:1.651px;margin-right:-1.651px">This campaign will highlight the transformative power</span></div>
<span class="bd out c2"><span style="letter-spacing:1.993px;margin-right:-1.993px">International Relations</span></span>
<span class="bd sec c3"><span style="letter-spacing:3.279px;margin-right:-3.279px">Low</span></span>
<span class="bd sec c4"><span style="letter-spacing:1.375px;margin-right:-1.375px">Positive</span></span>
<span class="cr"><span style="letter-spacing:2.191px;margin-right:-2.191px">4d ago</span></span>
<div class="b ap"><span style="letter-spacing:2.528px;margin-right:-2.528px">Approve</span></div><div class="b ds"><span style="letter-spacing:0.401px;margin-right:-0.401px">Dismiss</span></div><div class="b ex"><svg width="64.575" height="64.575" viewBox="0 0 24 24" fill="none" stroke="currentColor" stroke-width="2" stroke-linecap="round" stroke-linejoin="round"><path d="M15 3h6v6"/><path d="M10 14 21 3"/><path d="M18 13v6a2 2 0 0 1-2 2H5a2 2 0 0 1-2-2V8a2 2 0 0 1 2-2h6"/></svg></div>
</div>
<div class="tr" style="top:1598.693px">
<div class="rt"><span style="letter-spacing:0.715px;margin-right:-0.715px">Unmask the Truth: Epstein Files Exposed</span></div>
<div class="rs"><span style="letter-spacing:1.379px;margin-right:-1.379px">Our campaign aims to amplify the urgency and impor</span></div>
<span class="bd out c2"><span style="letter-spacing:1.393px;margin-right:-1.393px">Epstein</span></span>
<span class="bd med c3"><span style="letter-spacing:1.854px;margin-right:-1.854px">Medium</span></span>
<span class="bd sec c4"><span style="letter-spacing:2.606px;margin-right:-2.606px">Negative</span></span>
<span class="cr"><span style="letter-spacing:1.73px;margin-right:-1.73px">6d ago</span></span>
<div class="b ap"><span style="letter-spacing:2.528px;margin-right:-2.528px">Approve</span></div><div class="b ds"><span style="letter-spacing:0.401px;margin-right:-0.401px">Dismiss</span></div><div class="b ex"><svg width="64.575" height="64.575" viewBox="0 0 24 24" fill="none" stroke="currentColor" stroke-width="2" stroke-linecap="round" stroke-linejoin="round"><path d="M15 3h6v6"/><path d="M10 14 21 3"/><path d="M18 13v6a2 2 0 0 1-2 2H5a2 2 0 0 1-2-2V8a2 2 0 0 1 2-2h6"/></svg></div>
</div>
<div class="tr" style="top:1842.694px">
<div class="rt"><span style="letter-spacing:1.596px;margin-right:-1.596px">Bridging Gaps: Embracing Global Diplomacy</span></div>
<div class="rs"><span style="letter-spacing:1.647px;margin-right:-1.647px">Our campaign focuses on the critical importance of in</span></div>
<span class="bd out c2"><span style="letter-spacing:1.993px;margin-right:-1.993px">International Relations</span></span>
<span class="bd med c3"><span style="letter-spacing:1.854px;margin-right:-1.854px">Medium</span></span>
<span class="bd sec c4"><span style="letter-spacing:1.375px;margin-right:-1.375px">Positive</span></span>
<span class="cr"><span style="letter-spacing:1.923px;margin-right:-1.923px">12/24/2025</span></span>
<div class="b ap"><span style="letter-spacing:2.528px;margin-right:-2.528px">Approve</span></div><div class="b ds"><span style="letter-spacing:0.401px;margin-right:-0.401px">Dismiss</span></div><div class="b ex"><svg width="64.575" height="64.575" viewBox="0 0 24 24" fill="none" stroke="currentColor" stroke-width="2" stroke-linecap="round" stroke-linejoin="round"><path d="M15 3h6v6"/><path d="M10 14 21 3"/><path d="M18 13v6a2 2 0 0 1-2 2H5a2 2 0 0 1-2-2V8a2 2 0 0 1 2-2h6"/></svg></div>
</div>
<div class="tr" style="top:2086.695px">
<div class="rt"><span style="letter-spacing:1.139px;margin-right:-1.139px">Constitutional Compass: Guiding Today's Policies</span></div>
<div class="rs"><span style="letter-spacing:1.232px;margin-right:-1.232px">Our campaign will highlight how the US Constitution re</span></div>
<span class="bd out c2"><span style="letter-spacing:1.398px;margin-right:-1.398px">US Constitution</span></span>
<span class="bd sec c3"><span style="letter-spacing:3.279px;margin-right:-3.279px">Low</span></span>
<span class="bd sec c4"><span style="letter-spacing:1.375px;margin-right:-1.375px">Positive</span></span>
<span class="cr"><span style="letter-spacing:0.641px;margin-right:-0.641px">12/19/2025</span></span>
<div class="b ap"><span style="letter-spacing:2.528px;margin-right:-2.528px">Approve</span></div><div class="b ds"><span style="letter-spacing:0.401px;margin-right:-0.401px">Dismiss</span></div><div class="b ex"><svg width="64.575" height="64.575" viewBox="0 0 24 24" fill="none" stroke="currentColor" stroke-width="2" stroke-linecap="round" stroke-linejoin="round"><path d="M15 3h6v6"/><path d="M10 14 21 3"/><path d="M18 13v6a2 2 0 0 1-2 2H5a2 2 0 0 1-2-2V8a2 2 0 0 1 2-2h6"/></svg></div>
</div>
</div>
</main>
</div>
</body>
</html>
